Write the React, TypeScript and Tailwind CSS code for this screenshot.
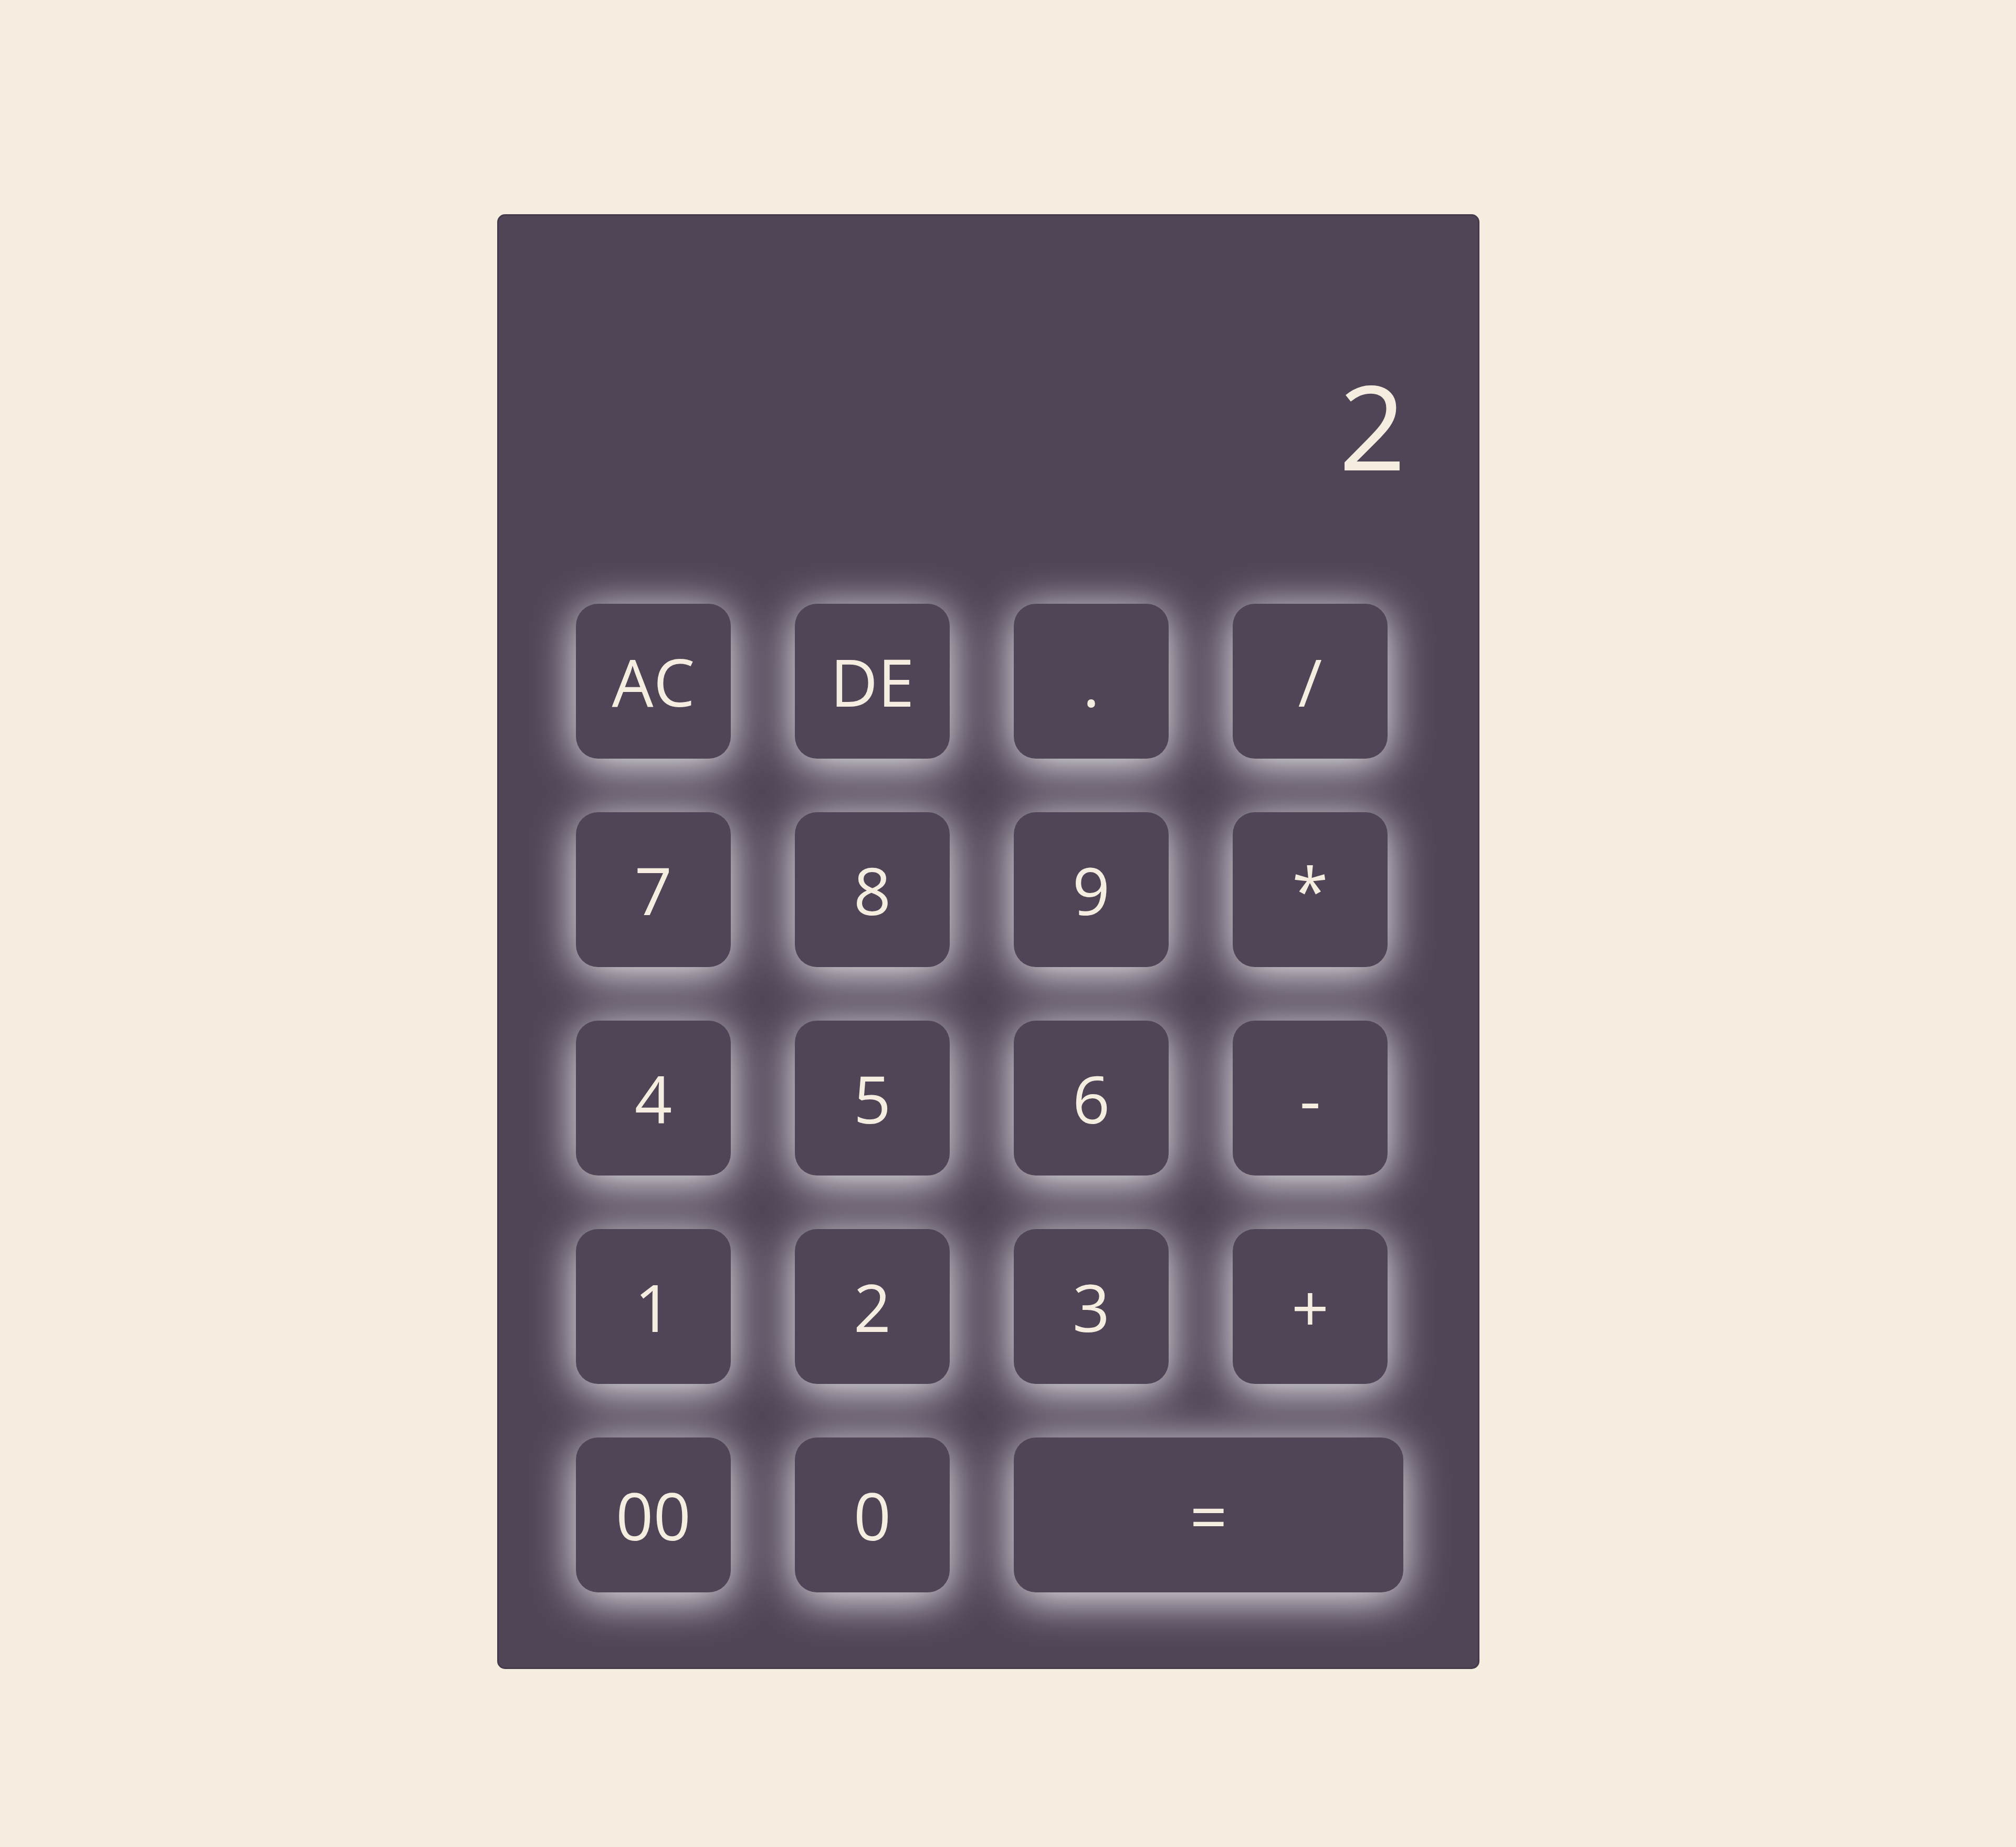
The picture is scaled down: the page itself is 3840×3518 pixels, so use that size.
import React, { useState } from "react";

// Calculator keys in row order; "=" spans the last two columns
const KEYS = ["AC", "DE", ".", "/", "7", "8", "9", "*", "4", "5", "6", "-", "1", "2", "3", "+", "00", "0", "="];

function Key({ label, onPress }: { label: string; onPress: (k: string) => void }) {
  const wide = label === "=";
  return (
    <button
      onClick={() => onPress(label)}
      className={`${wide ? "col-span-2 w-[742px]" : "w-[295px]"} h-[295px] rounded-[42px] bg-[#504457] text-[125px] leading-none text-[#f5eee0] flex items-center justify-center shadow-[0_12px_85px_rgba(255,255,255,0.95)] cursor-pointer`}
    >
      {label}
    </button>
  );
}

export default function App() {
  const [value, setValue] = useState("2");

  const press = (k: string) => {
    if (k === "AC") return setValue("");
    if (k === "DE") return setValue((v) => v.slice(0, -1));
    if (k === "=") {
      try {
        // eslint-disable-next-line no-new-func
        const out = Function(`"use strict"; return (${value || "0"})`)();
        setValue(String(out));
      } catch {
        setValue("Error");
      }
      return;
    }
    setValue((v) => v + k);
  };

  return (
    <div className="min-h-screen w-full bg-[#f5eee0] pl-[947px] pt-[408px] font-['Open_Sans',sans-serif]">
      <div className="w-[1871px] h-[2771px] rounded-[15px] border-[3px] border-[#443a4c] bg-[#504457] flex flex-col">
        {/* display */}
        <div className="h-[739px] pt-[287px] pr-[137px] text-right text-[224px] leading-none text-[#f5eee0]">
          {value}
        </div>

        {/* keypad */}
        <div className="grid grid-cols-[295px_295px_295px_295px] gap-x-[122px] gap-y-[102px] pl-[147px]">
          {KEYS.map((k) => (
            <Key key={k} label={k} onPress={press} />
          ))}
        </div>
      </div>
    </div>
  );
}
